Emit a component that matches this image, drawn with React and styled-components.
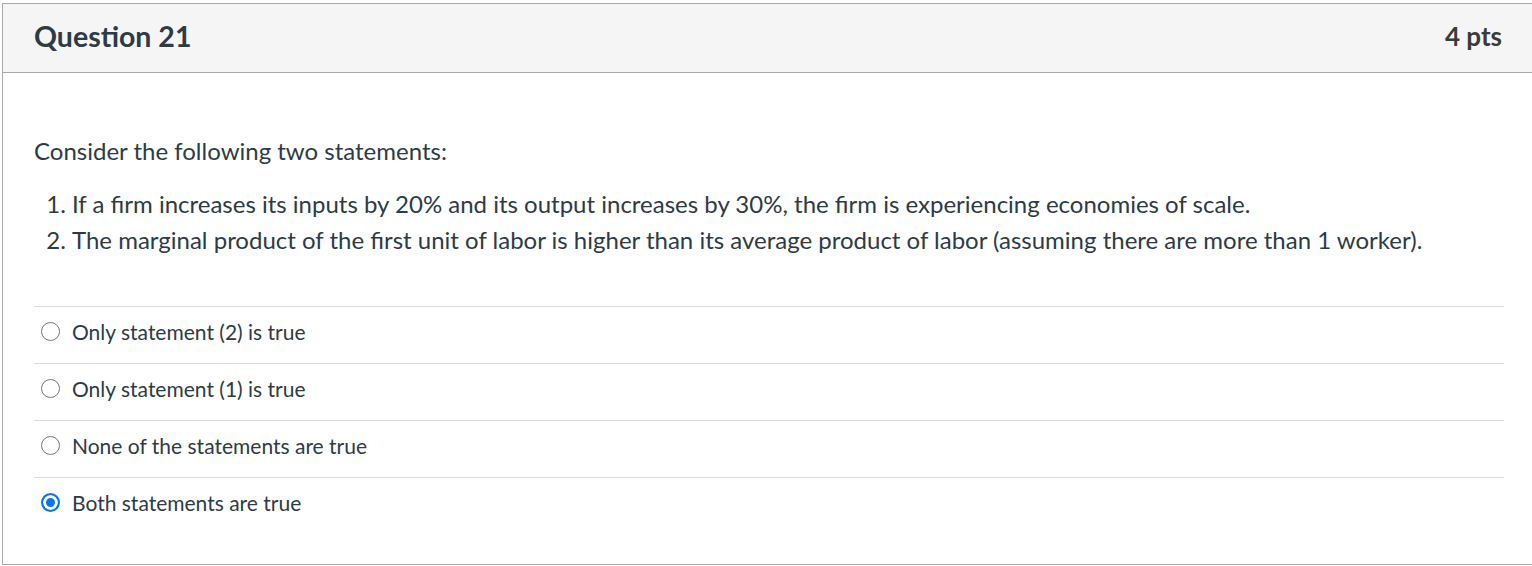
import React from 'react';
import styled, { createGlobalStyle } from 'styled-components';

const GlobalStyle = createGlobalStyle`
  html, body {
    margin: 0;
    padding: 0;
    background: #fff;
    overflow: hidden;
  }
  body {
    font-family: Lato, "Liberation Sans", sans-serif;
    color: #2d3b45;
  }
`;

const Page = styled.div`
  padding: 3px 0 0 2px;
`;

const QuestionBox = styled.div`
  width: 1532px;
  box-sizing: border-box;
  border: 1px solid #aaaaaa;
  border-right: none;
`;

const Header = styled.div`
  display: flex;
  align-items: center;
  justify-content: space-between;
  height: 69px;
  padding: 0 32px 4px 31px;
  box-sizing: border-box;
  background: #f5f5f5;
  border-bottom: 1px solid #aaaaaa;
`;

const Title = styled.h2`
  margin: 0;
  font-size: 28.5px;
  font-weight: 700;
  color: #2d3b45;
`;

const Points = styled.span`
  font-size: 26px;
  font-weight: 700;
  color: #3a3a3a;
`;

const Body = styled.div`
  padding: 60px 30px 30px 31px;
`;

const Prompt = styled.p`
  margin: 0;
  font-size: 24px;
  line-height: 36px;
`;

const StatementList = styled.ol`
  margin: 17px 0 48px;
  padding-left: 38px;
  font-size: 24px;
  line-height: 36px;
`;

const Answer = styled.label`
  display: flex;
  align-items: center;
  gap: 12px;
  height: 49px;
  padding: 0 0 7px 7px;
  border-top: 1px solid #dcdcdc;
  font-size: 21px;
  color: #2d3b45;
  cursor: pointer;
`;

const Radio = styled.span`
  width: 19px;
  height: 19px;
  box-sizing: border-box;
  border-radius: 50%;
  flex-shrink: 0;
  border: ${(p) => (p.$checked ? '2px solid #0a74f0' : '1.5px solid #767676')};
  background: ${(p) => (p.$checked ? '#0a74f0' : '#fff')};
  box-shadow: ${(p) => (p.$checked ? 'inset 0 0 0 3px #fff' : 'none')};
`;

const answers = [
  { text: 'Only statement (2) is true', checked: false },
  { text: 'Only statement (1) is true', checked: false },
  { text: 'None of the statements are true', checked: false },
  { text: 'Both statements are true', checked: true },
];

export default function App() {
  return (
    <Page>
      <GlobalStyle />
      <QuestionBox>
        <Header>
          <Title>Question 21</Title>
          <Points>4 pts</Points>
        </Header>
        <Body>
          <Prompt>Consider the following two statements:</Prompt>
          <StatementList>
            <li>
              If a firm increases its inputs by 20% and its output increases by 30%, the firm is
              experiencing economies of scale.
            </li>
            <li>
              The marginal product of the first unit of labor is higher than its average product of
              labor (assuming there are more than 1 worker).
            </li>
          </StatementList>
          {answers.map((a) => (
            <Answer key={a.text}>
              <Radio $checked={a.checked} />
              {a.text}
            </Answer>
          ))}
        </Body>
      </QuestionBox>
    </Page>
  );
}
